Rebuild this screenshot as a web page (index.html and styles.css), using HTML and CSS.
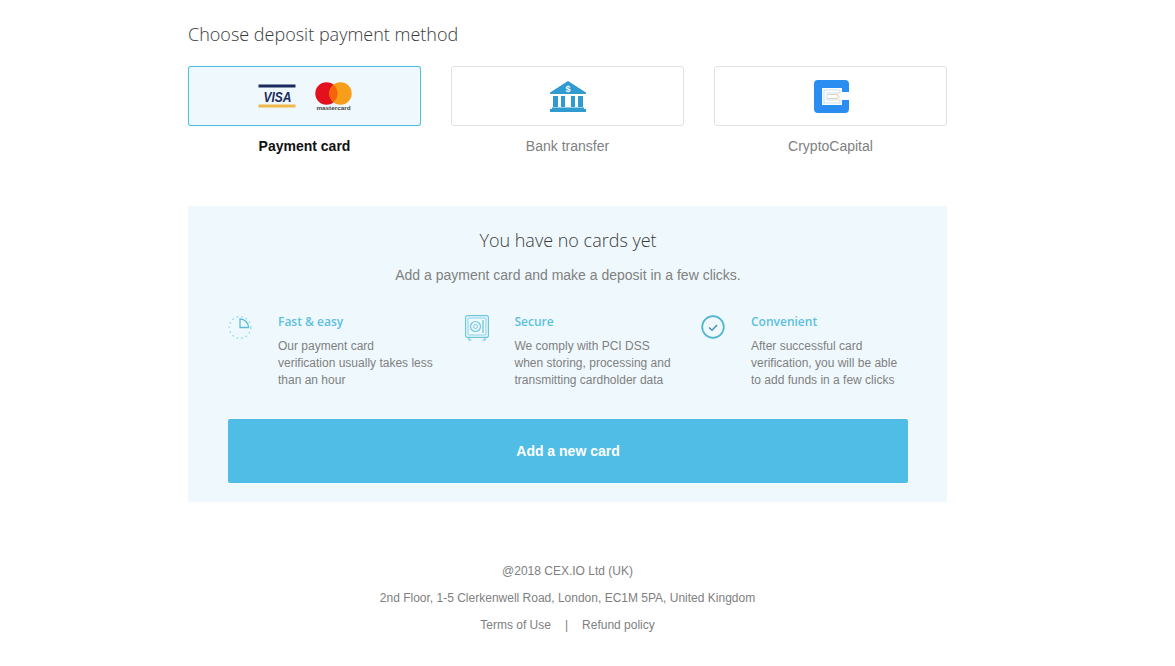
FILE: index.html
```html
<!DOCTYPE html>
<html lang="en">
<head>
<meta charset="utf-8">
<title>Choose deposit payment method</title>
<link rel="stylesheet" href="styles.css">
</head>
<body>
<main class="page">
  <h1 class="title">Choose deposit payment method</h1>
  <div class="methods">
    <div class="method method-active">
      <div class="tile">
        <svg width="38" height="24" viewBox="0 0 38 24">
          <rect x="0.500" y="0.500" width="37" height="3" fill="#1a2a5e"/>
          <rect x="0.500" y="20.500" width="37" height="3" fill="#f0b84a"/>
          <text x="5.500" y="17.500" textLength="28" lengthAdjust="spacingAndGlyphs" class="visa-text">VISA</text>
        </svg>
        <svg width="37" height="29" viewBox="0 0 37 29">
          <circle cx="11.500" cy="11.500" r="11.200" fill="#e3101e"/>
          <circle cx="25.500" cy="11.500" r="11.200" fill="#f79e1b"/>
          <path d="M18.500 2.800a11.200 11.200 0 0 1 0 17.400a11.200 11.200 0 0 1 0-17.400z" fill="#f5640b"/>
          <text x="1.500" y="28" textLength="34" lengthAdjust="spacingAndGlyphs" class="mc-text">mastercard</text>
        </svg>
      </div>
      <div class="method-label">Payment card</div>
    </div>
    <div class="method">
      <div class="tile">
        <svg width="38" height="31" viewBox="0 0 38 31">
          <path d="M19 0L37 11.500V13H1V11.500z" fill="#2f9bd0"/>
          <text x="19" y="11" text-anchor="middle" class="bank-text">$</text>
          <path d="M4 15h5v11H4zM12 15h4v11h-4zM22 15h4v11h-4zM29 15h5v11h-5z" fill="#2f9bd0"/>
          <path d="M3 26.500h32V28h2v3H1v-3h2z" fill="#2f9bd0"/>
        </svg>
      </div>
      <div class="method-label">Bank transfer</div>
    </div>
    <div class="method">
      <div class="tile">
        <svg width="36" height="33" viewBox="0 0 36 33">
          <path d="M5 0H32a4 4 0 0 1 4 4V12H29V8H9V25H29V20H36V29a4 4 0 0 1-4 4H5a4 4 0 0 1-4-4V4a4 4 0 0 1 4-4z" fill="#2a8df2"/>
          <path d="M11 10H27V13H14V20H27V23H11z" fill="none" stroke="#cbdff0" stroke-width="1.100"/>
          <path d="M15 14.500H24L26 16.500L24 18.500H15" fill="none" stroke="#e0d5b8" stroke-width="1.100"/>
        </svg>
      </div>
      <div class="method-label">CryptoCapital</div>
    </div>
  </div>

  <section class="panel">
    <h2 class="panel-title">You have no cards yet</h2>
    <p class="panel-sub">Add a payment card and make a deposit in a few clicks.</p>
    <div class="features">
      <div class="feature">
        <svg class="feature-icon" width="24" height="24" viewBox="0 0 24 24" fill="none">
          <circle cx="12" cy="12.500" r="10.800" stroke="#9fdcec" stroke-width="1.500" stroke-dasharray="1.700 3"/>
          <path d="M12 4C16.700 4 20.500 7.800 20.500 12.500H12z" stroke="#5cbcd6" stroke-width="1.300"/>
        </svg>
        <div class="feature-body">
          <h3 class="feature-title">Fast &amp; easy</h3>
          <p class="feature-text">Our payment card<br>verification usually takes less<br>than an hour</p>
        </div>
      </div>
      <div class="feature">
        <svg class="feature-icon" width="24" height="26" viewBox="0 0 24 26" fill="none" stroke="#6cc6de" stroke-width="1.200">
          <rect x="0.600" y="0.600" width="22.800" height="21.800" rx="2"/>
          <rect x="3" y="3" width="18" height="17" rx="1" stroke-width=".8"/>
          <circle cx="10.500" cy="11.500" r="5"/>
          <circle cx="10.500" cy="11.500" r="2" stroke-width=".9"/>
          <path d="M18 5v13" stroke-width="1.300"/>
          <path d="M4 22.500v2.500h2.500M20 22.500v2.500h-2.500"/>
        </svg>
        <div class="feature-body">
          <h3 class="feature-title">Secure</h3>
          <p class="feature-text">We comply with PCI DSS<br>when storing, processing and<br>transmitting cardholder data</p>
        </div>
      </div>
      <div class="feature">
        <svg class="feature-icon" width="24" height="24" viewBox="0 0 24 24" fill="none" stroke="#4fb6d2">
          <circle cx="12" cy="12" r="10.800" stroke-width="1.700"/>
          <path d="M8 12.500l3 2.800 5-5.300" stroke="#4d8fb5" stroke-width="1.500"/>
        </svg>
        <div class="feature-body">
          <h3 class="feature-title">Convenient</h3>
          <p class="feature-text">After successful card<br>verification, you will be able<br>to add funds in a few clicks</p>
        </div>
      </div>
    </div>
    <button class="add-card" type="button">Add a new card</button>
  </section>

  <footer class="footer">
    <p>@2018 CEX.IO Ltd (UK)</p>
    <p>2nd Floor, 1-5 Clerkenwell Road, London, EC1M 5PA, United Kingdom</p>
    <p class="footer-links"><a>Terms of Use</a><span class="sep">|</span><a>Refund policy</a></p>
  </footer>
</main>
</body>
</html>
```
FILE: styles.css
```css
* { box-sizing: border-box; }
html, body { margin: 0; padding: 0; background: #fff; }
body { font-family: "Liberation Sans", Arial, sans-serif; color: #7f7f7f; overflow: hidden; }
.page { width: 759px; margin-left: 188px; padding-top: 22px; }
.title {
  margin: 0;
  font: 300 18px/24px "Open Sans", sans-serif;
  color: #3a3a3a;
}
.methods { display: flex; gap: 30px; margin-top: 20px; }
.method { width: 233px; text-align: center; }
.tile {
  height: 60px;
  display: flex;
  align-items: center;
  justify-content: center;
  border: 1px solid #e2e2e2;
  border-radius: 3px;
  background: #fff;
}
.method-label { margin-top: 11px; font-size: 14px; line-height: 18px; color: #808080; }
.method-active .tile {
  border: 1px solid #4fc0e0;
  background: #eff9fd;
  gap: 19px;
  box-shadow: 0 0 1px #6fcce6;
}
.method-active .method-label { color: #111; font-weight: 700; }
.visa-text { font: italic 700 14px "Liberation Sans", sans-serif; fill: #1a2a5e; }
.mc-text { font: 700 6px "Liberation Sans", sans-serif; fill: #444; }
.bank-text { font: 700 9px "Liberation Sans", sans-serif; fill: #fff; }
.panel {
  margin-top: 51px;
  height: 296px;
  padding: 22px 39px 0 40px;
  background: #eff9fd;
  text-align: center;
}
.panel-title {
  margin: 0;
  font: 300 18px/24px "Open Sans", sans-serif;
  color: #3a3a3a;
}
.panel-sub { margin: 14px 0 0; font-size: 14px; line-height: 18px; color: #808080; }
.features { display: flex; margin-top: 29px; text-align: left; }
.feature { flex: none; width: 236.500px; display: flex; }
.feature-icon { flex: none; display: block; margin-top: 2px; }
.feature-body { margin-left: 26px; }
.feature-title {
  margin: 0;
  font: 600 12px/18px "Open Sans", sans-serif;
  color: #5cbfdf;
}
.feature-text { margin: 7px 0 0; font-size: 12px; line-height: 17px; color: #7f7f7f; }
.add-card {
  display: block;
  width: 680px;
  height: 64px;
  margin-top: 30px;
  border: 0;
  border-radius: 2px;
  background: #4fbde5;
  color: #fff;
  font: 700 14px "Liberation Sans", sans-serif;
}
.footer { margin-top: 61px; text-align: center; font-size: 12px; line-height: 17px; color: #808080; }
.footer p { margin: 0 0 10px; }
.sep { margin: 0 14px; }
```
